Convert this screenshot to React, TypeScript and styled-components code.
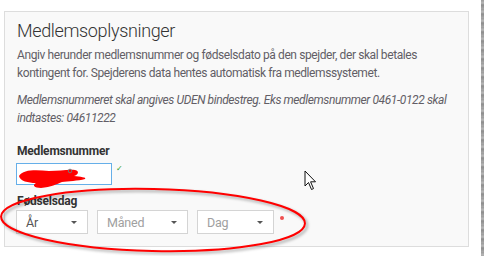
import styled, { createGlobalStyle } from "styled-components";

const GlobalStyle = createGlobalStyle`
  html, body {
    margin: 0;
    padding: 0;
    background: #ffffff;
  }
  body {
    font-family: Roboto, "Liberation Sans", sans-serif;
  }
`;

type SelectInfo = { label: string; width: number; filled: boolean };

const selects: SelectInfo[] = [
  { label: "År", width: 72, filled: true },
  { label: "Måned", width: 91, filled: false },
  { label: "Dag", width: 77, filled: false },
];

export default function App() {
  return (
    <>
      <GlobalStyle />
      <Page>
        <Main>
          <Panel>
            <Title>Medlemsoplysninger</Title>
            <Intro>
              Angiv herunder medlemsnummer og fødselsdato på den spejder, der
              skal betales kontingent for. Spejderens data hentes automatisk
              fra medlemssystemet.
            </Intro>
            <Note>
              Medlemsnummeret skal angives UDEN bindestreg. Eks medlemsnummer
              0461-0122 skal indtastes: 04611222
            </Note>

            <Label>Medlemsnummer</Label>
            <InputRow>
              <InputWrap>
                <Input type="text" defaultValue="" />
                {/* rød overstregning af nummeret */}
                <Scribble width="72" height="24" viewBox="0 0 72 24">
                  <path
                    d="M2 10 C6 3 20 4 32 5 C42 5 52 3 58 4 C63 5 61 9 57 10 C63 11 70 11 68 13 C61 15 51 15 45 16 C40 18 34 21 24 22 C17 22 15 19 19 17 C11 17 3 15 2 10 Z"
                    fill="#f00"
                  />
                  <circle cx="53" cy="5" r="1.8" fill="none" stroke="#777" strokeWidth="1" />
                </Scribble>
              </InputWrap>
              <Check>✓</Check>
            </InputRow>

            <Label $tight>Fødselsdag</Label>
            <SelectRow>
              {selects.map((s) => (
                <Select key={s.label} $width={s.width} $filled={s.filled}>
                  <span>{s.label}</span>
                  <Caret />
                </Select>
              ))}
              <Required />
            </SelectRow>
          </Panel>
        </Main>
        <Strip />

        {/* markering tegnet oven på skærmbilledet */}
        <Ellipse width="312" height="70" viewBox="0 0 312 70">
          <ellipse
            cx="155"
            cy="34"
            rx="152"
            ry="31"
            transform="rotate(1.3 155 34)"
            fill="none"
            stroke="#f00"
            strokeWidth="2"
          />
        </Ellipse>
        <Cursor width="14" height="21" viewBox="0 0 14 21">
          <path
            d="M1 1 L1 16 L4.5 12.5 L7.5 19.5 L9.5 18.6 L6.6 11.8 L11.5 11.8 Z"
            fill="#fff"
            stroke="#111"
            strokeWidth="1"
            strokeLinejoin="round"
          />
        </Cursor>
      </Page>
    </>
  );
}

const Page = styled.div`
  position: relative;
  display: flex;
  width: 484px;
  height: 256px;
  overflow: hidden;
`;

const Main = styled.div`
  flex: 1;
  padding: 11px 12px 0 4px;
`;

const Strip = styled.div`
  width: 3px;
  background: repeating-linear-gradient(
    180deg,
    #9a9a9a 0px,
    #b8b8b8 3px,
    #8c8c8c 5px,
    #a8a8a8 9px
  );
`;

const Panel = styled.div`
  box-sizing: border-box;
  height: 236px;
  border: 1px solid #dddddd;
  background: #f9f9f9;
  padding: 8px 12px 0 11px;
`;

const Title = styled.h2`
  margin: 0 0 4px 1px;
  font-size: 18px;
  font-weight: 300;
  line-height: 22px;
  letter-spacing: -0.35px;
  color: #333333;
`;

const Intro = styled.p`
  margin: 0 0 9px 1px;
  font-size: 12px;
  line-height: 18px;
  letter-spacing: -0.4px;
  color: #625e66;
`;

const Note = styled.p`
  margin: 0 0 16px 1px;
  font-size: 12px;
  line-height: 18px;
  letter-spacing: -0.4px;
  font-style: italic;
  color: #625e66;
`;

const Label = styled.div<{ $tight?: boolean }>`
  margin: 0 0 ${(p) => (p.$tight ? "1px" : "4px")} 1px;
  font-size: 12px;
  line-height: 16px;
  font-weight: 700;
  letter-spacing: -0.2px;
  color: #333333;
`;

const InputRow = styled.div`
  display: flex;
  align-items: flex-start;
  gap: 4px;
  margin-bottom: 8px;
`;

const InputWrap = styled.div`
  position: relative;
`;

const Input = styled.input`
  box-sizing: border-box;
  display: block;
  width: 96px;
  height: 22px;
  border: 1px solid #66afe9;
  background: #ffffff;
  outline: none;
  font-size: 12px;
`;

const Scribble = styled.svg`
  position: absolute;
  left: 1px;
  top: 3px;
`;

const Check = styled.span`
  font-size: 8px;
  line-height: 8px;
  margin-top: 2px;
  font-weight: 700;
  color: #2e9e2e;
  font-family: "DejaVu Sans", sans-serif;
`;

const SelectRow = styled.div`
  display: flex;
  align-items: flex-start;
  gap: 9px;
`;

const Select = styled.div<{ $width: number; $filled: boolean }>`
  box-sizing: border-box;
  display: flex;
  align-items: center;
  justify-content: space-between;
  width: ${(p) => p.$width}px;
  height: 24px;
  padding: 0 10px 0 9px;
  border: 1px solid #d4d4d4;
  background: #ffffff;
  font-size: 12.5px;
  letter-spacing: -0.2px;
  color: ${(p) => (p.$filled ? "#555555" : "#a0a0a0")};
`;

const Caret = styled.span`
  width: 0;
  height: 0;
  border-left: 3px solid transparent;
  border-right: 3px solid transparent;
  border-top: 3px solid #555555;
`;

const Required = styled.span`
  width: 4px;
  height: 4px;
  margin: 6px 0 0 -3px;
  border-radius: 50%;
  background: #f05050;
`;

const Ellipse = styled.svg`
  position: absolute;
  left: -2px;
  top: 186px;
  filter: drop-shadow(2px 2px 1.5px rgba(0, 0, 0, 0.35));
`;

const Cursor = styled.svg`
  position: absolute;
  left: 304px;
  top: 170px;
`;
